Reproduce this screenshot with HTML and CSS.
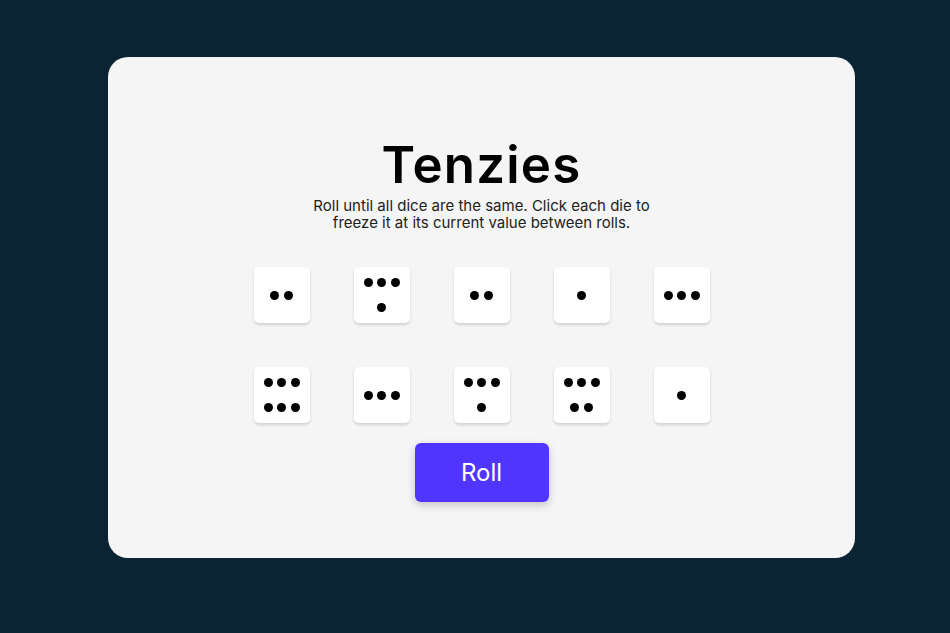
FILE: index.html
```html
<!DOCTYPE html>
<html lang="en">
<head>
<meta charset="utf-8">
<title>Tenzies</title>
<link rel="stylesheet" href="styles.css">
</head>
<body>
<main class="card">
  <h1 class="title">Tenzies</h1>
  <p class="instructions">Roll until all dice are the same. Click each die to freeze it at its current value between rolls.</p>
  <div class="dice">
    <div class="die"><div class="pips"><span class="dot"></span><span class="dot"></span></div></div>
    <div class="die"><div class="pips"><span class="dot"></span><span class="dot"></span><span class="dot"></span><span class="dot"></span></div></div>
    <div class="die"><div class="pips"><span class="dot"></span><span class="dot"></span></div></div>
    <div class="die"><div class="pips"><span class="dot"></span></div></div>
    <div class="die"><div class="pips"><span class="dot"></span><span class="dot"></span><span class="dot"></span></div></div>
    <div class="die"><div class="pips"><span class="dot"></span><span class="dot"></span><span class="dot"></span><span class="dot"></span><span class="dot"></span><span class="dot"></span></div></div>
    <div class="die"><div class="pips"><span class="dot"></span><span class="dot"></span><span class="dot"></span></div></div>
    <div class="die"><div class="pips"><span class="dot"></span><span class="dot"></span><span class="dot"></span><span class="dot"></span></div></div>
    <div class="die"><div class="pips"><span class="dot"></span><span class="dot"></span><span class="dot"></span><span class="dot"></span><span class="dot"></span></div></div>
    <div class="die"><div class="pips"><span class="dot"></span></div></div>
  </div>
  <button class="roll">Roll</button>
</main>
</body>
</html>
```
FILE: styles.css
```css
html, body {
  margin: 0;
  padding: 0;
}
body {
  background: #0B2434;
  height: 633px;
  overflow: hidden;
  font-family: Inter, "Noto Sans", sans-serif;
  padding-top: 57px;
  padding-left: 108px;
  box-sizing: border-box;
}
.card {
  width: 747px;
  height: 501px;
  background: #F5F5F5;
  border-radius: 20px;
  box-sizing: border-box;
  padding-top: 82px;
  display: flex;
  flex-direction: column;
  align-items: center;
}
.title {
  margin: 0;
  font-size: 51px;
  line-height: 1;
  font-weight: 600;
  letter-spacing: 1.2px;
  color: #000;
}
.instructions {
  margin: 7px 0 0;
  width: 350px;
  text-align: center;
  font-size: 15px;
  line-height: 17px;
  color: #222;
}
.dice {
  margin-top: 36px;
  display: grid;
  grid-template-columns: repeat(5, 56px);
  grid-auto-rows: 56px;
  column-gap: 44px;
  row-gap: 44px;
}
.die {
  background: #fff;
  border-radius: 5px;
  box-shadow: 0 2px 3px rgba(0, 0, 0, 0.15);
  display: flex;
  align-items: center;
  justify-content: center;
}
.pips {
  width: 37px;
  display: flex;
  flex-wrap: wrap;
  justify-content: center;
  column-gap: 4.5px;
  row-gap: 16px;
}
.dot {
  width: 9px;
  height: 9px;
  border-radius: 50%;
  background: #000;
}
.roll {
  margin-top: 20px;
  width: 134px;
  height: 59px;
  border: none;
  border-radius: 6px;
  background: #5035FF;
  color: #fff;
  font-family: Inter, "Noto Sans", sans-serif;
  font-size: 24px;
  font-weight: 400;
  box-shadow: 0 3px 8px rgba(0, 0, 0, 0.2);
  cursor: pointer;
}
```
